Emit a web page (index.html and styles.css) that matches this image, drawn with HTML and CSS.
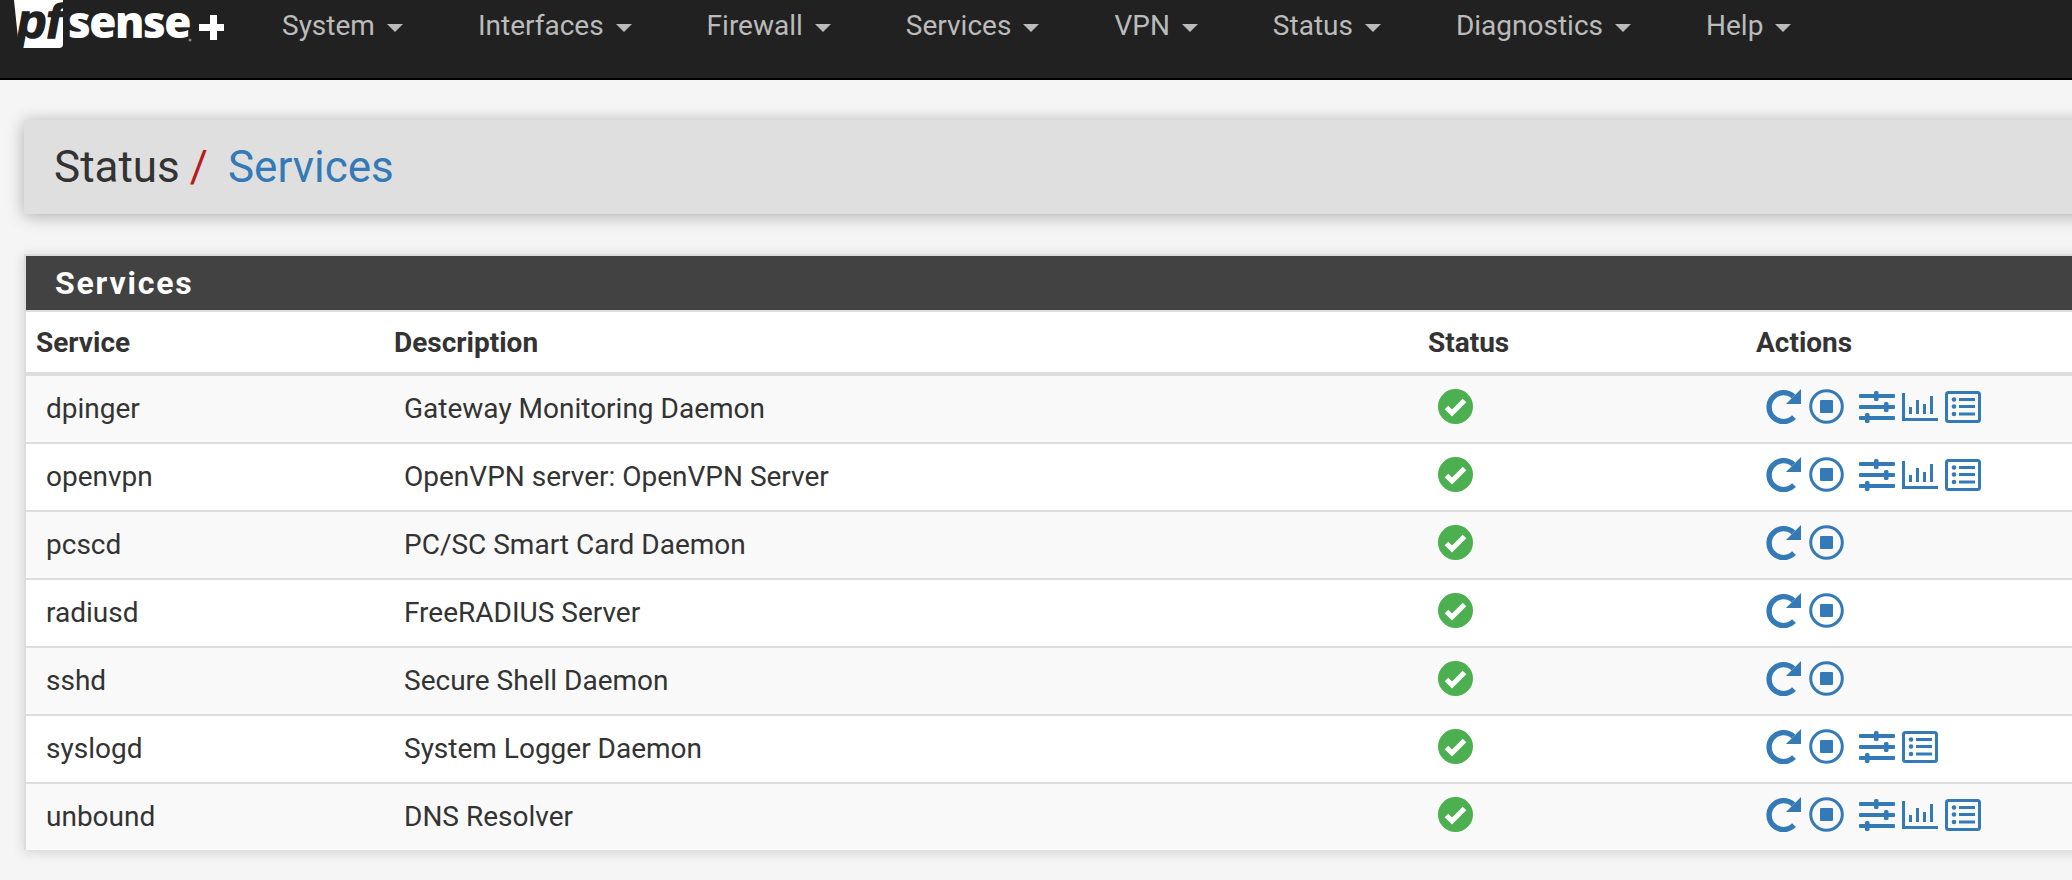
FILE: index.html
```html
<!DOCTYPE html>
<html lang="en">
<head>
    <meta charset="UTF-8">
    <meta name="viewport" content="width=device-width, initial-scale=1.0">
    <title>Status / Services</title>
    <link rel="stylesheet" href="styles.css">
</head>
<body>
    <svg class="sprites" width="0" height="0">
        <symbol id="i-ok" viewBox="0 0 35 35">
            <circle cx="17.5" cy="17.5" r="17.5" fill="#4caf50"/>
            <path d="M8.500 18.500l5.500 5.500L26.500 11.500" fill="none" stroke="#fff" stroke-width="5"/>
        </symbol>
        <symbol id="i-restart" viewBox="0 0 35 35">
            <path d="M27.500 7.500A14.500 14.500 0 1 0 28 28.200" fill="none" stroke="#337ab7" stroke-width="5.400"/>
            <path d="M35 0v15H20z" fill="#337ab7"/>
        </symbol>
        <symbol id="i-stop" viewBox="0 0 35 35">
            <circle cx="17.5" cy="17.5" r="15.8" fill="none" stroke="#337ab7" stroke-width="3"/>
            <rect x="11" y="11" width="13" height="13" rx="1" fill="#337ab7"/>
        </symbol>
        <symbol id="i-sliders" viewBox="0 0 36 32">
            <g fill="#337ab7">
                <rect y="3" width="36" height="4" rx="1"/>
                <rect y="14" width="36" height="4" rx="1"/>
                <rect y="25" width="36" height="4" rx="1"/>
                <rect x="15" width="4.5" height="10" rx="1.5"/>
                <rect x="25" y="11" width="4.5" height="10" rx="1.5"/>
                <rect x="6" y="22" width="4.5" height="10" rx="1.5"/>
            </g>
        </symbol>
        <symbol id="i-chart" viewBox="0 0 36 28">
            <g fill="#337ab7">
                <rect width="3" height="28"/>
                <rect y="25" width="36" height="3"/>
                <rect x="7" y="14" width="3" height="7"/>
                <rect x="14" y="7" width="3" height="14"/>
                <rect x="21" y="11" width="3" height="10"/>
                <rect x="28" y="3" width="3" height="18"/>
            </g>
        </symbol>
        <symbol id="i-list" viewBox="0 0 36 32">
            <rect x="1.5" y="1.5" width="33" height="29" rx="2" fill="none" stroke="#337ab7" stroke-width="3"/>
            <g fill="#337ab7">
                <circle cx="9" cy="8.500" r="2.300"/>
                <circle cx="9" cy="15.500" r="2.300"/>
                <circle cx="9" cy="23" r="2.300"/>
                <rect x="14" y="7" width="16" height="3"/>
                <rect x="14" y="14" width="16" height="3"/>
                <rect x="14" y="21.500" width="16" height="3"/>
            </g>
        </symbol>
    </svg>

    <nav class="navbar">
        <svg class="logo" width="226" height="50" viewBox="0 0 226 50">
            <path class="logo-box" d="M0 0H49V44Q49 48 45 48H5Z"/>
            <text class="logo-pf" x="3" y="38">pf</text>
            <text class="logo-sense" x="54" y="38">sense</text>
            <circle class="logo-reg" cx="176" cy="40" r="1.500"/>
            <path class="logo-plus" d="M185 24h11v-9h7v9h7v7h-7v9h-7v-9h-11z"/>
        </svg>
        <ul class="nav-list">
            <li class="nav-item">System</li>
            <li class="nav-item">Interfaces</li>
            <li class="nav-item">Firewall</li>
            <li class="nav-item">Services</li>
            <li class="nav-item">VPN</li>
            <li class="nav-item">Status</li>
            <li class="nav-item">Diagnostics</li>
            <li class="nav-item">Help</li>
        </ul>
    </nav>

    <main class="content">
        <h1 class="breadcrumb">
            <span>Status</span>
            <span class="crumb-sep">/</span>
            <a class="crumb-link">Services</a>
        </h1>

        <section class="panel">
            <h2 class="panel-title">Services</h2>
            <table class="services">
                <colgroup>
                    <col class="col-service">
                    <col class="col-desc">
                    <col class="col-status">
                    <col>
                </colgroup>
                <thead>
                    <tr><th>Service</th><th>Description</th><th>Status</th><th>Actions</th></tr>
                </thead>
                <tbody>
                    <tr>
                        <td>dpinger</td>
                        <td>Gateway Monitoring Daemon</td>
                        <td><svg class="ic-ok"><use href="#i-ok"/></svg></td>
                        <td><div class="actions">
                            <svg class="ic"><use href="#i-restart"/></svg>
                            <svg class="ic"><use href="#i-stop"/></svg>
                            <svg class="ic-wide ic-first"><use href="#i-sliders"/></svg>
                            <svg class="ic-wide"><use href="#i-chart"/></svg>
                            <svg class="ic-wide"><use href="#i-list"/></svg>
                        </div></td>
                    </tr>
                    <tr>
                        <td>openvpn</td>
                        <td>OpenVPN server: OpenVPN Server</td>
                        <td><svg class="ic-ok"><use href="#i-ok"/></svg></td>
                        <td><div class="actions">
                            <svg class="ic"><use href="#i-restart"/></svg>
                            <svg class="ic"><use href="#i-stop"/></svg>
                            <svg class="ic-wide ic-first"><use href="#i-sliders"/></svg>
                            <svg class="ic-wide"><use href="#i-chart"/></svg>
                            <svg class="ic-wide"><use href="#i-list"/></svg>
                        </div></td>
                    </tr>
                    <tr>
                        <td>pcscd</td>
                        <td>PC/SC Smart Card Daemon</td>
                        <td><svg class="ic-ok"><use href="#i-ok"/></svg></td>
                        <td><div class="actions">
                            <svg class="ic"><use href="#i-restart"/></svg>
                            <svg class="ic"><use href="#i-stop"/></svg>
                        </div></td>
                    </tr>
                    <tr>
                        <td>radiusd</td>
                        <td>FreeRADIUS Server</td>
                        <td><svg class="ic-ok"><use href="#i-ok"/></svg></td>
                        <td><div class="actions">
                            <svg class="ic"><use href="#i-restart"/></svg>
                            <svg class="ic"><use href="#i-stop"/></svg>
                        </div></td>
                    </tr>
                    <tr>
                        <td>sshd</td>
                        <td>Secure Shell Daemon</td>
                        <td><svg class="ic-ok"><use href="#i-ok"/></svg></td>
                        <td><div class="actions">
                            <svg class="ic"><use href="#i-restart"/></svg>
                            <svg class="ic"><use href="#i-stop"/></svg>
                        </div></td>
                    </tr>
                    <tr>
                        <td>syslogd</td>
                        <td>System Logger Daemon</td>
                        <td><svg class="ic-ok"><use href="#i-ok"/></svg></td>
                        <td><div class="actions">
                            <svg class="ic"><use href="#i-restart"/></svg>
                            <svg class="ic"><use href="#i-stop"/></svg>
                            <svg class="ic-wide ic-first"><use href="#i-sliders"/></svg>
                            <svg class="ic-wide"><use href="#i-list"/></svg>
                        </div></td>
                    </tr>
                    <tr>
                        <td>unbound</td>
                        <td>DNS Resolver</td>
                        <td><svg class="ic-ok"><use href="#i-ok"/></svg></td>
                        <td><div class="actions">
                            <svg class="ic"><use href="#i-restart"/></svg>
                            <svg class="ic"><use href="#i-stop"/></svg>
                            <svg class="ic-wide ic-first"><use href="#i-sliders"/></svg>
                            <svg class="ic-wide"><use href="#i-chart"/></svg>
                            <svg class="ic-wide"><use href="#i-list"/></svg>
                        </div></td>
                    </tr>
                </tbody>
            </table>
        </section>
    </main>
</body>
</html>
```

FILE: styles.css
```css
html, body {
    height: 100%;
    margin: 0;
    overflow: hidden;
}
body {
    font-family: 'Roboto', sans-serif;
    background-color: #f5f5f5;
    color: #333;
}
.sprites {
    display: block;
}

/* top bar */
.navbar {
    display: flex;
    height: 78px;
    background-color: #212121;
    border-bottom: 2px solid #000;
    padding-left: 14px;
}
.logo {
    display: block;
}
.logo-box {
    fill: #fff;
}
.logo-pf {
    font-family: 'Liberation Sans', sans-serif;
    font-size: 48px;
    font-weight: bold;
    font-style: italic;
    fill: #212121;
    stroke: #212121;
    stroke-width: 1.5px;
}
.logo-sense {
    font-family: 'Open Sans', sans-serif;
    font-size: 44px;
    font-weight: 800;
    letter-spacing: -1.5px;
    fill: #fff;
}
.logo-reg {
    fill: #888;
}
.logo-plus {
    fill: #fff;
}
.nav-list {
    display: flex;
    gap: 75px;
    list-style-type: none;
    margin: 0;
    padding: 10px 0 0 42px;
}
.nav-item {
    font-size: 28px;
    line-height: 32px;
    color: #bbb;
    white-space: nowrap;
}
.nav-item::after {
    content: "";
    display: inline-block;
    margin-left: 12px;
    vertical-align: middle;
    border-top: 8px solid #bbb;
    border-left: 8px solid transparent;
    border-right: 8px solid transparent;
}

/* page */
.content {
    margin-right: -30px;
    padding: 40px 0 0 24px;
}
.breadcrumb {
    display: flex;
    align-items: center;
    gap: 10px;
    height: 94px;
    margin: 0 0 40px;
    padding-left: 30px;
    font-size: 44px;
    font-weight: 400;
    background-color: #dfdfdf;
    box-shadow: 0 2px 16px rgba(0, 0, 0, 0.3);
}
.crumb-sep {
    color: #b71c1c;
    margin-right: 10px;
}
.crumb-link {
    color: #337ab7;
}

.panel {
    border: 2px solid #ddd;
    border-bottom: none;
    background-color: #fff;
    box-shadow: 0 2px 12px rgba(0, 0, 0, 0.15);
}
.panel-title {
    height: 54px;
    margin: 0;
    padding-left: 29px;
    background-color: #424242;
    border-bottom: 2px solid #ddd;
    color: #fff;
    font-size: 32px;
    font-weight: 700;
    line-height: 54px;
    letter-spacing: 1.8px;
}

/* table */
.services {
    width: 100%;
    border-collapse: collapse;
    table-layout: fixed;
    font-size: 28px;
}
.col-service {
    width: 358px;
}
.col-desc {
    width: 1034px;
}
.col-status {
    width: 328px;
}
.services th {
    height: 60px;
    padding: 0 0 0 10px;
    text-align: left;
    font-weight: 700;
    border-bottom: 4px solid #ddd;
}
.services td {
    height: 64px;
    padding: 0 0 2px 20px;
    border-bottom: 2px solid #ddd;
}
.services tbody tr:nth-child(odd) {
    background-color: #f9f9f9;
}
.services tbody tr:last-child td {
    border-bottom: none;
}
.ic-ok {
    display: block;
    width: 35px;
    height: 35px;
    margin-bottom: 3px;
}
.actions {
    display: flex;
    align-items: center;
    gap: 7px;
    margin-bottom: 3px;
}
.ic {
    display: block;
    width: 35px;
    height: 35px;
}
.ic + .ic {
    margin-left: 1px;
}
.ic-wide {
    display: block;
    width: 36px;
    height: 32px;
}
.ic-first {
    margin-left: 8px;
}
```
